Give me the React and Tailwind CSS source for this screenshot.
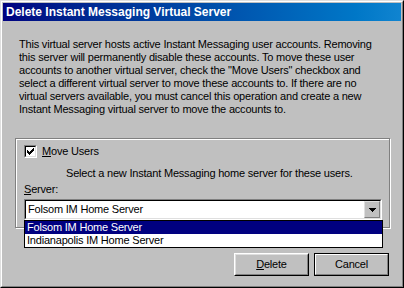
export default function App() {
  const raisedOuter = "border border-t-white border-l-white border-r-black border-b-black";
  const raisedInner = "border border-t-[#dfdfdf] border-l-[#dfdfdf] border-r-[#808080] border-b-[#808080]";
  return (
    <div className="relative w-[404px] h-[288px] bg-[#c0c0c0] font-['Liberation_Sans',Arial,sans-serif] text-[11px] leading-[13px] text-black tracking-[-0.2px] overflow-hidden">
      <div className="w-full h-full border border-t-[#dfdfdf] border-l-[#dfdfdf] border-r-black border-b-black">
        <div className="h-full border border-t-white border-l-white border-r-[#808080] border-b-[#808080] p-px flex flex-col">
          <div className="h-[18px] shrink-0 bg-linear-to-r from-[#000080] to-[#1084d0] flex items-center pl-[3px] text-white font-bold text-[12px] tracking-normal">
            Delete Instant Messaging Virtual Server
          </div>

          <div className="ml-[16px] mt-[17px] whitespace-nowrap">
            This virtual server hosts active Instant Messaging user accounts. Removing<br />
            this server will permanently disable these accounts. To move these user<br />
            accounts to another virtual server, check the "Move Users" checkbox and<br />
            select a different virtual server to move these accounts to. If there are no<br />
            virtual servers available, you must cancel this operation and create a new<br />
            Instant Messaging virtual server to move the accounts to.
          </div>

          <div className="ml-[12px] mt-[22px] w-[375px] h-[90px] border border-[#808080] shadow-[inset_1px_1px_0_#fff,1px_1px_0_#fff] flex flex-col pl-[8px] pr-[7px] pt-[6px]">
            <div className="flex items-center h-[13px]">
              <div className="w-[13px] h-[13px] border border-t-[#808080] border-l-[#808080] border-r-white border-b-white">
                <div className="w-full h-full border border-t-black border-l-black border-r-[#dfdfdf] border-b-[#dfdfdf] bg-white relative">
                  <svg width="9" height="9" viewBox="0 0 9 9" className="absolute left-0 top-0" shapeRendering="crispEdges">
                    <rect x="1" y="3" width="1" height="3" fill="#000" />
                    <rect x="2" y="4" width="1" height="3" fill="#000" />
                    <rect x="3" y="5" width="1" height="3" fill="#000" />
                    <rect x="4" y="4" width="1" height="3" fill="#000" />
                    <rect x="5" y="3" width="1" height="3" fill="#000" />
                    <rect x="6" y="2" width="1" height="3" fill="#000" />
                    <rect x="7" y="1" width="1" height="3" fill="#000" />
                  </svg>
                </div>
              </div>
              <span className="ml-[5px]"><span className="underline">M</span>ove Users</span>
            </div>
            <div className="mt-[9px] pl-[42px] whitespace-nowrap">Select a new Instant Messaging home server for these users.</div>
            <div className="mt-[3px]"><span className="underline">S</span>erver:</div>
            <div className="mt-[3px] h-[21px] w-[358px] border border-t-[#808080] border-l-[#808080] border-r-white border-b-white">
              <div className="w-full h-full border border-t-black border-l-black border-r-[#dfdfdf] border-b-[#dfdfdf] bg-white flex items-center">
                <span className="pl-[2px] flex-1">Folsom IM Home Server</span>
                <div className={"w-[16px] h-[17px] " + raisedInner + " bg-[#c0c0c0] flex items-center justify-center"}>
                  <svg width="7" height="4" viewBox="0 0 7 4" shapeRendering="crispEdges">
                    <rect x="0" y="0" width="7" height="1" fill="#000" />
                    <rect x="1" y="1" width="5" height="1" fill="#000" />
                    <rect x="2" y="2" width="3" height="1" fill="#000" />
                    <rect x="3" y="3" width="1" height="1" fill="#000" />
                  </svg>
                </div>
              </div>
            </div>
          </div>

          <div className="mt-[25px] flex justify-end gap-[5px] pr-[12px]">
            <div className={"w-[75px] h-[23px] " + raisedOuter}>
              <div className={"w-full h-full " + raisedInner + " flex items-center justify-center"}>
                <span><span className="underline">D</span>elete</span>
              </div>
            </div>
            <div className="w-[75px] h-[23px] border border-black">
              <div className="w-full h-full border border-t-white border-l-white border-r-[#808080] border-b-[#808080] flex items-center justify-center">
                Cancel
              </div>
            </div>
          </div>
        </div>
      </div>

      <div className="absolute left-[24px] top-[220px] w-[359px] h-[28px] border border-black bg-white flex flex-col">
        <div className="h-[13px] bg-[#000080] text-white pl-[2px]">Folsom IM Home Server</div>
        <div className="h-[13px] pl-[2px]">Indianapolis IM Home Server</div>
      </div>
    </div>
  );
}
